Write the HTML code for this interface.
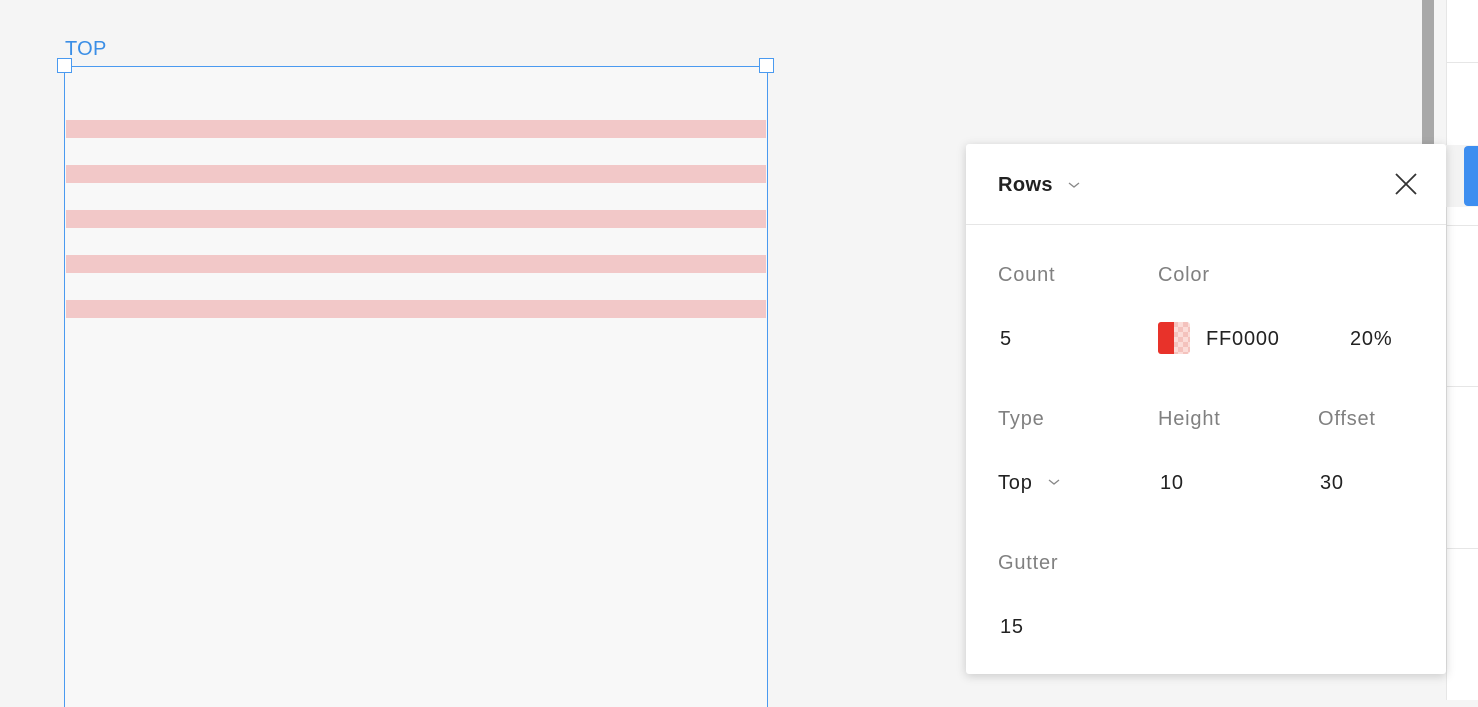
<!DOCTYPE html>
<html><head><style>
body{margin:0;width:1478px;height:700px;background:#f5f5f5;position:relative;overflow:hidden;font-family:"Liberation Sans",sans-serif}
.a{position:absolute}
.lbl{color:#808080;font-size:20px;letter-spacing:0.8px}
.val{color:#222;font-size:20px;letter-spacing:0.8px}
</style></head><body>
<div class="a" style="left:65px;top:38px;color:#3a8ee6;font-size:20px;letter-spacing:0.3px">TOP</div>
<div class="a" style="left:64px;top:66px;width:702px;height:640px;background:#f8f8f8;border:1.5px solid #4a9af0;border-bottom:none"></div>
<div class="a" style="left:57px;top:58px;width:15px;height:15px;background:#fff;border:1.5px solid #4a9af0;box-sizing:border-box"></div>
<div class="a" style="left:759px;top:58px;width:15px;height:15px;background:#fff;border:1.5px solid #4a9af0;box-sizing:border-box"></div>
<div class="a" style="left:66px;top:120px;width:700px;height:18px;background:#f2c8c8"></div>
<div class="a" style="left:66px;top:165px;width:700px;height:18px;background:#f2c8c8"></div>
<div class="a" style="left:66px;top:210px;width:700px;height:18px;background:#f2c8c8"></div>
<div class="a" style="left:66px;top:255px;width:700px;height:18px;background:#f2c8c8"></div>
<div class="a" style="left:66px;top:300px;width:700px;height:18px;background:#f2c8c8"></div>
<div class="a" style="left:1422px;top:0;width:12px;height:150px;background:#a8a8a8"></div>
<div class="a" style="left:1446px;top:0;width:32px;height:700px;background:#fff;border-left:1px solid #e6e6e6"></div>
<div class="a" style="left:1446px;top:62px;width:32px;height:1px;background:#e6e6e6"></div>
<div class="a" style="left:1446px;top:225px;width:32px;height:1px;background:#e6e6e6"></div>
<div class="a" style="left:1446px;top:386px;width:32px;height:1px;background:#e6e6e6"></div>
<div class="a" style="left:1446px;top:548px;width:32px;height:1px;background:#e6e6e6"></div>
<div class="a" style="left:1446px;top:145px;width:32px;height:62px;background:#f3f3f3"></div>
<div class="a" style="left:1464px;top:146px;width:20px;height:60px;background:#3d8ef0;border-radius:4px"></div>
<div class="a" style="left:966px;top:144px;width:480px;height:530px;background:#fff;border-radius:3px;box-shadow:0 2px 10px rgba(0,0,0,.18)">
 <div class="a" style="left:32px;top:30px;font-size:20px;font-weight:bold;color:#222;letter-spacing:0.4px">Rows</div>
 <svg class="a" style="left:101px;top:36px" width="14" height="10"><path d="M2 3l5 4 5-4" fill="none" stroke="#888" stroke-width="1.3"/></svg>
 <svg class="a" style="left:428px;top:28px" width="24" height="24"><path d="M2 2L22 22M22 2L2 22" stroke="#333" stroke-width="1.8"/></svg>
 <div class="a" style="left:0;top:80px;width:480px;height:1px;background:#e6e6e6"></div>
 <div class="a lbl" style="left:32px;top:120px">Count</div>
 <div class="a lbl" style="left:192px;top:120px">Color</div>
 <div class="a val" style="left:34px;top:184px">5</div>
 <div class="a" style="left:192px;top:178px;width:32px;height:32px;border-radius:3px;overflow:hidden;background:repeating-conic-gradient(#f4c2bd 0 25%,#fbdcd8 0 50%) 0 0/10px 10px"><div style="width:16px;height:32px;background:#e8322a"></div></div>
 <div class="a val" style="left:240px;top:184px">FF0000</div>
 <div class="a val" style="left:384px;top:184px">20%</div>
 <div class="a lbl" style="left:32px;top:264px">Type</div>
 <div class="a lbl" style="left:192px;top:264px">Height</div>
 <div class="a lbl" style="left:352px;top:264px">Offset</div>
 <div class="a val" style="left:32px;top:328px">Top</div>
 <svg class="a" style="left:81px;top:333px" width="14" height="10"><path d="M2 3l5 4 5-4" fill="none" stroke="#888" stroke-width="1.3"/></svg>
 <div class="a val" style="left:194px;top:328px">10</div>
 <div class="a val" style="left:354px;top:328px">30</div>
 <div class="a lbl" style="left:32px;top:408px">Gutter</div>
 <div class="a val" style="left:34px;top:472px">15</div>
</div>
</body></html>
